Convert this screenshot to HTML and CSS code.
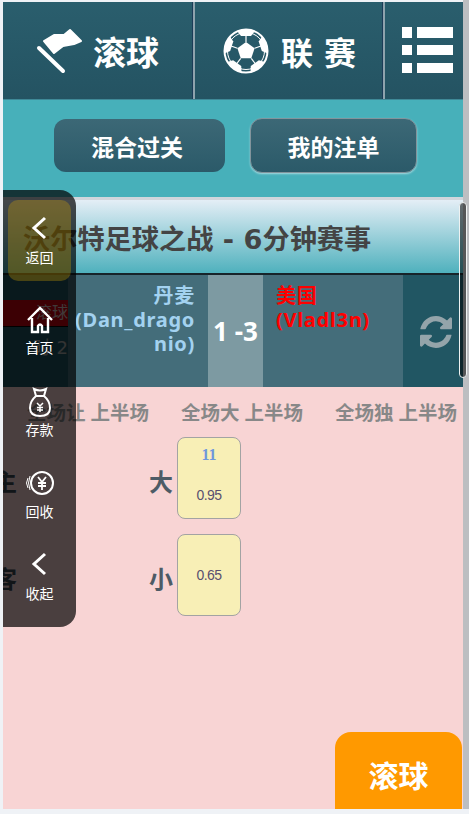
FILE: index.html
```html
<!DOCTYPE html>
<html lang="zh-CN">
<head>
    <meta charset="UTF-8">
    <meta name="viewport" content="width=device-width, initial-scale=1.0">
    <title>滚球</title>
    <link rel="stylesheet" href="styles.css">
</head>
<body>

<div class="page">
    <!-- Top nav -->
    <div class="topnav">
        <div class="nav-cell nav-live">
            <svg class="nav-flag" viewBox="35 27 48 48">
                <line x1="38" y1="48" x2="62" y2="71" stroke="#fff" stroke-width="4" stroke-linecap="round"/>
                <path d="M43 41 L53 35 L63 35 L69 30 L80 41 L73 44 L62 46 L53 53 Z" fill="#fff" stroke="#fff" stroke-width="2" stroke-linejoin="round"/>
            </svg>
            <span>滚球</span>
        </div>
        <div class="nav-cell nav-league">
            <svg class="nav-ball" viewBox="-23 -23 46 46">
                <circle r="21.5" fill="none" stroke="#fff" stroke-width="2"/>
                <circle r="18.5" fill="none" stroke="#fff" stroke-width="1"/>
                <path id="patch" d="M-9 -20 Q0 -23 9 -20 L5 -15 L-5 -15 Z" fill="#fff"/>
                <use href="#patch" transform="rotate(72)"/>
                <use href="#patch" transform="rotate(144)"/>
                <use href="#patch" transform="rotate(216)"/>
                <use href="#patch" transform="rotate(288)"/>
                <path d="M0 -9 L8.6 -2.8 L5.3 7.3 L-5.3 7.3 L-8.6 -2.8 Z" fill="#fff"/>
                <g stroke="#fff" stroke-width="1.2">
                    <line x1="0" y1="-9" x2="0" y2="-16"/>
                    <line x1="8.6" y1="-2.8" x2="15" y2="-5"/>
                    <line x1="5.3" y1="7.3" x2="9.5" y2="13"/>
                    <line x1="-5.3" y1="7.3" x2="-9.5" y2="13"/>
                    <line x1="-8.6" y1="-2.8" x2="-15" y2="-5"/>
                </g>
            </svg>
            <span>联 赛</span>
        </div>
        <div class="nav-cell nav-menu">
            <svg class="nav-list" viewBox="0 0 51 47">
                <g fill="#fff">
                    <rect x="0" y="0" width="10" height="11"/>
                    <rect x="15" y="0" width="36" height="11"/>
                    <rect x="0" y="18" width="10" height="10"/>
                    <rect x="15" y="18" width="36" height="10"/>
                    <rect x="0" y="36" width="10" height="10"/>
                    <rect x="15" y="36" width="36" height="10"/>
                </g>
            </svg>
        </div>
    </div>

    <!-- Sub buttons -->
    <div class="subbar">
        <div class="sub-btn sub-btn-mix">混合过关</div>
        <div class="sub-btn sub-btn-mine">我的注单</div>
    </div>

    <div class="match-title">沃尔特足球之战 - 6分钟赛事</div>

    <!-- Score row -->
    <div class="score-row">
        <div class="score-side">
            <div class="side-tag">滚球</div>
            <div class="side-time">时 2</div>
        </div>
        <div class="team team-home">丹麦<br>(Dan_drago<br>nio)</div>
        <div class="score">1 -3</div>
        <div class="team team-away">美国<br>(Vladl3n)</div>
        <div class="score-refresh">
            <svg class="refresh-icon" viewBox="0 0 1536 1536">
                <path fill="#94a4aa" d="M1511 928q0 5-1 7-64 268-268 434.5t-478 166.5q-146 0-282.5-55t-243.5-157l-129 129q-19 19-45 19t-45-19-19-45v-448q0-26 19-45t45-19h448q26 0 45 19t19 45-19 45l-137 137q71 66 161 102t187 36q134 0 250-65t186-179q11-17 53-117 8-23 30-23h192q13 0 22.5 9.5t9.5 22.5zm25-800v448q0 26-19 45t-45 19h-448q-26 0-45-19t-19-45 19-45l138-138q-148-137-349-137-134 0-250 65t-186 179q-11 17-53 117-8 23-30 23h-199q-13 0-22.5-9.5t-9.5-22.5v-7q65-268 270-434.5t480-166.5q146 0 284 55.5t245 156.5l130-129q19-19 45-19t45 19 19 45z"/>
            </svg>
        </div>
    </div>

    <!-- Odds -->
    <div class="odds">
        <div class="odds-head">
            <span>全场让 上半场</span>
            <span>全场大 上半场</span>
            <span>全场独 上半场</span>
        </div>
        <div class="odds-row">
            <span class="odds-team">主</span>
            <span class="odds-label">大</span>
            <div class="odds-cell">
                <span class="odds-line">11</span>
                <span class="odds-value">0.95</span>
            </div>
        </div>
        <div class="odds-row">
            <span class="odds-team">客</span>
            <span class="odds-label">小</span>
            <div class="odds-cell odds-cell-plain">
                <span class="odds-value">0.65</span>
            </div>
        </div>
    </div>
</div>

<!-- Floating side menu -->
<div class="sidemenu">
    <div class="side-item side-item-active">
        <svg class="side-icon" viewBox="0 0 40 40">
            <polyline points="25,10 14,20 25,30" fill="none" stroke="#fff" stroke-width="3"/>
        </svg>
        <span>返回</span>
    </div>
    <div class="side-item">
        <svg class="side-icon" viewBox="0 0 40 40">
            <path d="M8 22 L20 10 L32 22 M12 20 V34 H18 V28 Q20 25 22 28 V34 H28 V20" fill="none" stroke="#fff" stroke-width="2.4"/>
        </svg>
        <span>首页</span>
    </div>
    <div class="side-item">
        <svg class="side-icon" viewBox="0 0 40 40">
            <path d="M14 9 Q20 12 26 9 L24 16 Q30 21 30 28 Q30 36 20 36 Q10 36 10 28 Q10 21 16 16 Z M16 16 H24" fill="none" stroke="#fff" stroke-width="2"/>
            <path d="M17 23 L20 26 L23 23 M20 26 V32 M17 27.500 H23 M17 30 H23" fill="none" stroke="#fff" stroke-width="1.500"/>
        </svg>
        <span>存款</span>
    </div>
    <div class="side-item">
        <svg class="side-icon" viewBox="0 0 40 40">
            <circle cx="22" cy="21" r="11" fill="none" stroke="#fff" stroke-width="2"/>
            <path d="M18 15 L22 20 L26 15 M22 20 V28 M18 21 H26 M18 24 H26" fill="none" stroke="#fff" stroke-width="1.800"/>
            <path d="M10 14 Q7 21 10 28 M8 16 Q5 21 8 26" fill="none" stroke="#fff" stroke-width="1"/>
        </svg>
        <span>回收</span>
    </div>
    <div class="side-item">
        <svg class="side-icon" viewBox="0 0 40 40">
            <polyline points="25,10 14,20 25,30" fill="none" stroke="#fff" stroke-width="3"/>
        </svg>
        <span>收起</span>
    </div>
</div>

<div class="scroll-track"></div>
<div class="scroll-thumb"></div>
<div class="float-live">滚球</div>

</body>
</html>
```

FILE: styles.css
```css
* {
    box-sizing: border-box;
}
html, body {
    margin: 0;
    height: 100%;
}
body {
    height: 814px;
    padding: 2px 6px 5px 3px;
    overflow: hidden;
    position: relative;
    background-color: #eff2f6;
    font-family: "DejaVu Sans", "Noto Sans CJK SC", sans-serif;
}
.page {
    height: 807px;
    display: flex;
    flex-direction: column;
    overflow: hidden;
    background-color: #f8d4d4;
}

/* top nav */
.topnav {
    height: 98px;
    flex: none;
    display: flex;
    background: linear-gradient(#2a5e6d, #245362);
    border-bottom: 1px solid #3f8997;
}
.nav-cell {
    display: flex;
    align-items: center;
    justify-content: center;
    color: white;
    font-size: 32px;
    font-weight: bold;
}
.nav-live {
    width: 190px;
    gap: 9px;
    font-size: 33px;
    border-right: 1px solid #1c3c58;
}
.nav-league {
    width: 190px;
    gap: 12px;
    padding-left: 2px;
    border-left: 2px solid #8ea3ad;
    border-right: 1px solid #1c3c58;
}
.nav-menu {
    flex: 1;
    padding-left: 6px;
    border-left: 2px solid #8ea3ad;
}
.nav-flag {
    width: 48px;
    height: 48px;
}
.nav-ball {
    width: 46px;
    height: 46px;
}
.nav-list {
    width: 51px;
    height: 47px;
}

/* sub buttons */
.subbar {
    height: 97px;
    flex: none;
    display: flex;
    align-items: flex-start;
    gap: 25px;
    padding: 19px 0 0 51px;
    background-color: #47b0ba;
}
.sub-btn {
    height: 53px;
    display: flex;
    align-items: center;
    justify-content: center;
    border-radius: 12px;
    color: white;
    font-size: 23px;
    font-weight: bold;
    background: linear-gradient(#3c6876, #2b5a69);
}
.sub-btn-mix {
    width: 171px;
    padding-right: 5px;
}
.sub-btn-mine {
    width: 167px;
    height: 55px;
    margin-top: -1px;
    border: 1px solid #82949c;
    box-shadow: 0 1px 2px #a9d8de;
}

/* match title */
.match-title {
    height: 78px;
    flex: none;
    display: flex;
    align-items: center;
    padding-left: 20px;
    color: #444;
    font-size: 27.2px;
    font-weight: bold;
    border-top: 3px solid #d0d6dc;
    border-bottom: 2px solid #17242a;
    background: linear-gradient(#e4eef6, #4fb1bd);
}

/* score */
.score-row {
    height: 112px;
    flex: none;
    display: flex;
    color: white;
    font-weight: bold;
}
.score-side {
    width: 65px;
    padding-top: 25px;
    text-align: right;
    color: #aaa;
    font-size: 16px;
    font-weight: normal;
    background-color: #215663;
}
.side-tag {
    height: 27px;
    line-height: 26px;
    color: #d8c0c0;
    background-color: #c80010;
    border-bottom: 1px solid #000;
}
.side-time {
    padding-top: 6px;
    font-size: 18px;
}
.team {
    width: 140px;
    padding-top: 9px;
    font-family: "Noto Sans", "Noto Sans CJK SC", sans-serif;
    font-size: 20px;
    line-height: 24px;
    letter-spacing: 0.7px;
    background-color: #446d7a;
}
.team-home {
    padding-right: 13px;
    text-align: right;
    color: #a3d2f0;
}
.team-away {
    padding-left: 13px;
    color: #f00;
}
.score {
    width: 55px;
    display: flex;
    align-items: center;
    justify-content: center;
    font-family: "Noto Sans", sans-serif;
    font-size: 26px;
    white-space: nowrap;
    background-color: #7d9aa2;
}
.score-refresh {
    flex: 1;
    display: flex;
    align-items: center;
    justify-content: center;
    padding: 2px 0 0 6px;
    background-color: #215663;
}
.refresh-icon {
    width: 32px;
    height: 32px;
}

/* odds table */
.odds {
    flex: 1;
}
.odds-head {
    height: 50px;
    display: grid;
    grid-template-columns: repeat(3, 154px);
    padding: 12px 0 0 24px;
    color: #888;
    font-family: "Noto Sans", "Noto Sans CJK SC", sans-serif;
    font-size: 19.5px;
    font-weight: bold;
    line-height: 28px;
    white-space: nowrap;
}
.odds-row {
    height: 82px;
    margin-bottom: 15px;
    display: flex;
    align-items: center;
    font-size: 24px;
    font-weight: bold;
}
.odds-team {
    width: 24px;
    margin-left: -10px;
    padding-top: 5px;
    color: #3a4650;
}
.odds-label {
    width: 24px;
    margin-left: 132px;
    margin-right: 4px;
    padding-top: 5px;
    color: #4d5b66;
}
.odds-cell {
    width: 64px;
    height: 82px;
    display: flex;
    flex-direction: column;
    align-items: center;
    border: 1px solid #a3a3a3;
    border-radius: 8px;
    background-color: #f8efb6;
    font-weight: normal;
}
.odds-cell-plain {
    justify-content: center;
}
.odds-line {
    height: 22px;
    margin-top: 8px;
    color: #6f97dc;
    font-family: "Liberation Serif", serif;
    font-size: 16px;
    font-weight: bold;
}
.odds-value {
    color: #5a5070;
    font-family: "Liberation Sans", sans-serif;
    font-size: 14px;
    letter-spacing: -0.5px;
}
.odds-line + .odds-value {
    margin-top: 19px;
}

/* side menu */
.sidemenu {
    position: absolute;
    left: 3px;
    top: 190px;
    width: 73px;
    height: 437px;
    padding: 10px 5px;
    border-radius: 0 16px 16px 0;
    background-color: rgba(0, 0, 0, 0.7);
    color: white;
}
.side-item {
    height: 81px;
    margin-bottom: 1px;
    padding-top: 8px;
    display: flex;
    flex-direction: column;
    align-items: center;
    font-size: 14px;
    line-height: 20px;
}
.side-item-active {
    margin-bottom: 9px;
    border-radius: 10px;
    background-color: rgba(220, 170, 0, 0.3);
}
.side-icon {
    width: 40px;
    height: 40px;
    flex: none;
}

/* scrollbar */
.scroll-track {
    position: absolute;
    right: 0;
    top: 0;
    width: 6px;
    height: 809px;
    background-color: rgba(70, 70, 70, 0.3);
}
.scroll-thumb {
    position: absolute;
    left: 459px;
    top: 202px;
    width: 8px;
    height: 176px;
    border: 1px solid #eef2f2;
    border-radius: 4px;
    background-color: rgba(0, 0, 0, 0.55);
}

.float-live {
    position: absolute;
    left: 335px;
    top: 732px;
    width: 127px;
    height: 77px;
    padding-top: 7px;
    display: flex;
    align-items: center;
    justify-content: center;
    border-radius: 16px 16px 0 0;
    background-color: #ff9900;
    color: white;
    font-size: 30px;
    font-weight: bold;
}
```
